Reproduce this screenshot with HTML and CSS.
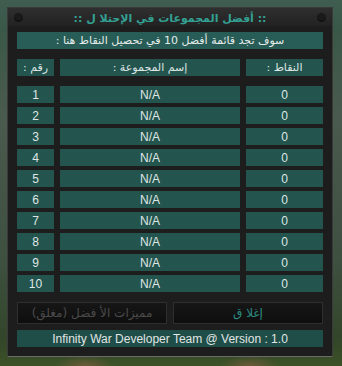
FILE: index.html
```html
<!DOCTYPE html>
<html lang="ar">
  <head>
    <meta charset="UTF-8" />
    <meta name="viewport" content="width=device-width, initial-scale=1.0" />
    <title>أفضل المجموعات</title>
    <link rel="stylesheet" href="styles.css">
  </head>
  <body>
    <div class="scene">
      <div class="panel">
        <div class="head">
          <span class="bolt"></span>
          <h1 dir="rtl">:: أفضل المجموعات في الإحتلا ل ::</h1>
          <span class="bolt"></span>
        </div>

        <div class="body">
          <div class="bar intro" dir="rtl">سوف تجد قائمة أفضل 10 في تحصيل النقاط هنا :</div>

          <div class="grid heads">
            <div class="cell" dir="rtl">رقم :</div>
            <div class="cell" dir="rtl">إسم المجموعة :</div>
            <div class="cell" dir="rtl">النقاط :</div>
          </div>

          <div class="rows" id="rows"></div>

          <div class="buttons">
            <button class="btn off" dir="rtl">مميزات الأ فضل (مغلق)</button>
            <button class="btn close" dir="rtl">إغلا ق</button>
          </div>

          <div class="bar foot">Infinity War Developer Team @ Version : 1.0</div>
        </div>
      </div>
    </div>
    <script>
      var rows = document.getElementById("rows");
      for (var i = 1; i <= 10; i++) {
        var r = document.createElement("div");
        r.className = "grid";
        r.innerHTML = '<div class="cell">' + i + '</div><div class="cell">N/A</div><div class="cell">0</div>';
        rows.appendChild(r);
      }
    </script>
  </body>
</html>
```

FILE: styles.css
```css
*{
    margin: 0;
    padding: 0;
    box-sizing: border-box;
}

body{
    width: 342px;
    height: 366px;
    overflow: hidden;
    font-family: "Liberation Sans", "DejaVu Sans", sans-serif;
    background:
        radial-gradient(ellipse 30px 10px at 85px 366px, #6b5a3a, transparent),
        radial-gradient(ellipse 30px 10px at 250px 366px, #6b5a3a, transparent),
        linear-gradient(180deg, #3f5e50 0px, #3a5848 30px, #4a5a4e 120px, #3e5040 260px, #33462a 340px, #3c5226 366px);
}

.scene{
    padding: 7px 9px 0 7px;
}

.panel{
    width: 326px;
    height: 350px;
    background: #1d1d1d;
    border: 1px solid #3a3a3a;
    border-bottom-color: #6a6a6a;
    display: flex;
    flex-direction: column;
}

.head{
    height: 18px;
    display: flex;
    align-items: center;
    justify-content: space-between;
    padding: 0 6px;
    background: linear-gradient(180deg, #2f2f2f, #222);
}

.head h1{
    font-size: 11px;
    font-weight: bold;
    color: #33a193;
    font-family: "DejaVu Sans", sans-serif;
    margin-top: 2px;
}

.bolt{
    width: 9px;
    height: 9px;
    border-radius: 50%;
    background: radial-gradient(circle at 50% 40%, #1a1a1a 50%, #0c0c0c 70%, #3a3a3a 100%);
    margin-top: 1px;
}

.body{
    padding: 6px 9px 0 9px;
}

.bar{
    height: 17px;
    background: #285c56;
    color: #e4ecea;
    font-size: 12px;
    display: flex;
    align-items: center;
    justify-content: center;
}

.intro{
    font-family: "DejaVu Sans", sans-serif;
    font-size: 11px;
}

.grid{
    display: grid;
    grid-template-columns: 37px 180px 77px;
    column-gap: 6px;
    height: 17px;
}

.heads{
    margin: 10px 0;
}

.cell{
    background: #24544e;
    color: #dfe7e5;
    font-size: 12px;
    display: flex;
    align-items: center;
    justify-content: center;
}

.heads .cell{
    font-family: "DejaVu Sans", sans-serif;
    font-size: 11px;
}

.rows{
    display: flex;
    flex-direction: column;
    gap: 4px;
}

.buttons{
    display: flex;
    gap: 6px;
    margin: 10px 0 6px;
}

.btn{
    width: 150px;
    height: 22px;
    background: linear-gradient(180deg, #161616, #0e0e0e);
    border: 1px solid #2e2e2e;
    font-family: "DejaVu Sans", sans-serif;
    font-size: 12px;
}

.off{
    color: #4b4b4b;
}

.close{
    color: #2c8f83;
}

.foot{
    background: #1f4d48;
    color: #e0e6e4;
}
```
